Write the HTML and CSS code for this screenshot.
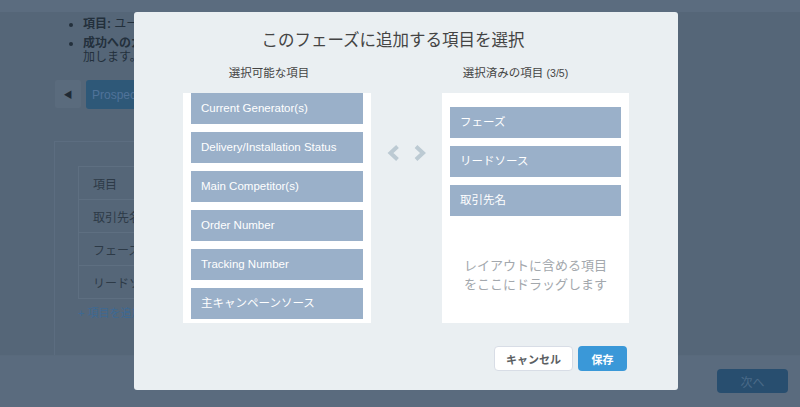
FILE: index.html
```html
<!DOCTYPE html>
<html lang="ja">
  <head>
    <meta charset="UTF-8" />
    <meta name="viewport" content="width=device-width, initial-scale=1.0" />
    <title>項目を選択</title>
    <link rel="stylesheet" href="styles.css">
  </head>
  <body>
    <div class="page">
      <div class="topbar"></div>
      <ul class="notes">
        <li><b>項目:</b> ユーザー入力</li>
        <li><b>成功へのガイド</b><br />加します。</li>
      </ul>
      <div class="path-row">
        <button class="back-btn">&#9664;</button>
        <button class="stage-btn">Prospecting</button>
      </div>
      <div class="card">
        <table class="fields">
          <tr><td>項目</td></tr>
          <tr><td>取引先名</td></tr>
          <tr><td>フェーズ</td></tr>
          <tr><td>リードソース</td></tr>
        </table>
        <div class="add-link">+ 項目を追加/削除</div>
      </div>
      <div class="footer">
        <button class="next-btn">次へ</button>
      </div>
    </div>

    <div class="modal">
      <h2 class="modal-title">このフェーズに追加する項目を選択</h2>
      <div class="col-heads">
        <div class="col-head left">選択可能な項目</div>
        <div class="col-head right">選択済みの項目 <span class="count">(3/5)</span></div>
      </div>
      <div class="picker">
        <div class="panel available">
          <div class="item">Current Generator(s)</div>
          <div class="item">Delivery/Installation Status</div>
          <div class="item">Main Competitor(s)</div>
          <div class="item">Order Number</div>
          <div class="item">Tracking Number</div>
          <div class="item">主キャンペーンソース</div>
        </div>
        <div class="move">
          <svg width="40" height="16" viewBox="0 0 40 16">
            <polyline points="10.5,1.5 3.5,8 10.5,14.5" fill="none" stroke="#bccad3" stroke-width="4" />
            <polyline points="29,1.5 36,8 29,14.5" fill="none" stroke="#bccad3" stroke-width="4" />
          </svg>
        </div>
        <div class="panel selected">
          <div class="item">フェーズ</div>
          <div class="item">リードソース</div>
          <div class="item">取引先名</div>
          <div class="drop-hint">レイアウトに含める項目<br />をここにドラッグします</div>
        </div>
      </div>
      <div class="actions">
        <button class="btn cancel">キャンセル</button>
        <button class="btn save">保存</button>
      </div>
    </div>
  </body>
</html>
```

FILE: styles.css
```css
body {
  font-family: "Liberation Sans", "Noto Sans CJK JP", sans-serif;
  background-color: #556678;
  margin: 0;
  height: 100vh;
  overflow: hidden;
}

button {
  font-family: inherit;
  border: none;
  cursor: pointer;
}

/* page behind the dialog (already dimmed) */
.page {
  display: flex;
  flex-direction: column;
  height: 100vh;
}

.topbar {
  height: 12px;
  background-color: #5b6c7f;
}

.notes {
  margin: 5px 0 0;
  padding-left: 83px;
  font-size: 12px;
  color: #23303c;
}

.notes li {
  line-height: 14px;
  margin-bottom: 5px;
}

.path-row {
  display: flex;
  gap: 5px;
  margin: 11px 0 0 55px;
}

.back-btn {
  width: 26px;
  height: 28px;
  background-color: #5a6b7d;
  color: #1f2a35;
  font-size: 9px;
  border-radius: 2px;
}

.stage-btn {
  width: 140px;
  height: 29px;
  background-color: #2e5878;
  color: #50739a;
  font-size: 12px;
  text-align: left;
  padding-left: 6px;
  border-radius: 3px;
}

.card {
  flex: 1;
  margin: 32px 0 0 54px;
  width: 560px;
  border: 1px solid #5c6d80;
  border-bottom: none;
  padding: 24px 0 0 23px;
  box-sizing: border-box;
}

.fields {
  border-collapse: collapse;
  width: 400px;
}

.fields td {
  height: 32px;
  border: 1px solid #5e6f81;
  padding: 0 0 0 14px;
  font-size: 12px;
  color: #2d3a47;
}

.add-link {
  margin-top: 5px;
  font-size: 11px;
  color: #3d6993;
}

.footer {
  height: 51px;
  background-color: #5a6b7e;
  border-top: 1px solid #596a7c;
  display: flex;
  justify-content: flex-end;
  align-items: center;
  padding-right: 12px;
}

.next-btn {
  width: 71px;
  height: 24px;
  background-color: #284e6f;
  color: #4a6a88;
  font-size: 12px;
  border-radius: 4px;
  margin-bottom: 1px;
}

/* dialog */
.modal {
  position: absolute;
  left: 134px;
  top: 12px;
  width: 544px;
  height: 378px;
  box-sizing: border-box;
  background-color: #eaeff2;
  border-radius: 3px;
  padding: 16px 49px 0;
}

.modal-title {
  margin: 0;
  padding-right: 26px;
  font-size: 16.5px;
  font-weight: normal;
  line-height: 24px;
  text-align: center;
  color: #444;
}

.col-heads {
  display: flex;
  justify-content: space-between;
  margin-top: 13px;
}

.col-head {
  font-size: 11.5px;
  line-height: 16px;
  color: #444;
  text-align: center;
}

.col-head.left {
  width: 172px;
  padding-right: 16px;
}

.col-head.right {
  width: 147px;
  padding-right: 40px;
}

.count {
  font-size: 10.5px;
}

.picker {
  display: flex;
  margin-top: 12px;
}

.panel {
  background-color: #fff;
  height: 230px;
  box-sizing: border-box;
  padding: 0 8px;
  overflow: hidden;
}

.available {
  width: 188px;
}

.selected {
  width: 187px;
  padding-top: 14px;
}

.item {
  height: 31px;
  line-height: 31px;
  margin-bottom: 8px;
  padding-left: 10px;
  background-color: #9ab0c9;
  color: #fff;
  font-size: 11.5px;
  white-space: nowrap;
}

.move {
  width: 71px;
  display: flex;
  justify-content: center;
  padding-top: 52px;
  box-sizing: border-box;
}

.drop-hint {
  margin-top: 40px;
  text-align: center;
  font-size: 13px;
  line-height: 19px;
  color: #a3a8ad;
}

.actions {
  display: flex;
  justify-content: flex-end;
  gap: 5px;
  margin: 23px 2px 0 0;
}

.btn {
  height: 25px;
  border-radius: 4px;
  font-size: 11px;
  font-weight: bold;
}

.cancel {
  width: 79px;
  background-color: #fff;
  border: 1px solid #d8dde6;
  color: #5a5e62;
}

.save {
  width: 49px;
  background-color: #3a98d8;
  color: #fff;
}
```
